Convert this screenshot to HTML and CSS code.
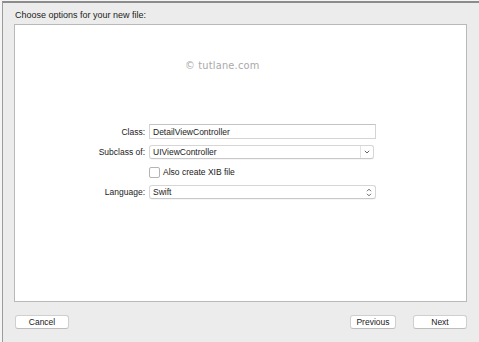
FILE: index.html
```html
<!DOCTYPE html>
<html>
<head>
<meta charset="utf-8">
<link rel="stylesheet" href="styles.css">
</head>
<body>
<div class="window">
  <div class="title">Choose options for your new file:</div>
  <div class="panel">
    <div class="watermark">© tutlane.com</div>
    <div class="form">
      <div class="row r-class">
        <div class="label">Class:</div>
        <div class="field text">DetailViewController</div>
      </div>
      <div class="row r-sub">
        <div class="label">Subclass of:</div>
        <div class="field popup">
          <span class="val">UIViewController</span>
          <span class="arrow divided">
            <svg width="6" height="4" viewBox="0 0 6 4"><path d="M0.8 0.8 L3 3 L5.2 0.8" fill="none" stroke="#555" stroke-width="0.9"/></svg>
          </span>
        </div>
      </div>
      <div class="row r-check">
        <div class="label"></div>
        <div class="check"><span class="box"></span><span>Also create XIB file</span></div>
      </div>
      <div class="row r-lang">
        <div class="label">Language:</div>
        <div class="field popup lang">
          <span class="val">Swift</span>
          <span class="arrow">
            <svg width="6" height="9" viewBox="0 0 6 9"><path d="M1 3.2 L3 1.2 L5 3.2 M1 5.8 L3 7.8 L5 5.8" fill="none" stroke="#555" stroke-width="0.9"/></svg>
          </span>
        </div>
      </div>
    </div>
  </div>
  <div class="footer">
    <button class="btn cancel">Cancel</button>
    <div class="spacer"></div>
    <button class="btn prev">Previous</button>
    <button class="btn next">Next</button>
  </div>
</div>
</body>
</html>
```
FILE: styles.css
```css
html, body {
  margin: 0;
  padding: 0;
  background: #f4f4f4;
}
body {
  width: 479px;
  height: 342px;
  overflow: hidden;
  font-family: "Liberation Sans", Arial, sans-serif;
  color: #1a1a1a;
}
.window {
  margin: 1px 0 0 2px;
  height: 341px;
  box-sizing: border-box;
  background: #ececec;
  border-top: 2px solid #8c8c8c;
  border-left: 1px solid #9c9c9c;
  display: flex;
  flex-direction: column;
}
.title {
  font-size: 9px;
  line-height: 11px;
  padding: 7px 0 0 12px;
  height: 21px;
  box-sizing: border-box;
  color: #222;
}
.panel {
  margin-left: 11px;
  width: 453px;
  height: 278px;
  box-sizing: border-box;
  background: #fff;
  border: 1px solid #b9b9b9;
  display: flex;
  flex-direction: column;
}
.watermark {
  margin-top: 35px;
  margin-left: 170px;
  font-family: "DejaVu Sans", Verdana, sans-serif;
  font-size: 9.8px;
  line-height: 12px;
  color: #a9a9a9;
  letter-spacing: 0.2px;
}
.form {
  margin-top: 52px;
  display: flex;
  flex-direction: column;
  gap: 6px;
}
.row {
  display: flex;
  align-items: center;
  gap: 4px;
  font-size: 8.5px;
}
.label {
  width: 130px;
  text-align: right;
  color: #222;
}
.field {
  width: 227px;
  box-sizing: border-box;
  display: flex;
  align-items: center;
  background: #fff;
}
.text {
  height: 15px;
  border: 1px solid #d4d4d4;
  border-top-color: #c4c4c4;
  padding-left: 3px;
}
.popup {
  width: 225px;
  height: 14px;
  border: 1px solid #d6d6d6;
  border-bottom-color: #c8c8c8;
  border-radius: 3px;
  padding-left: 3px;
  box-shadow: 0 0.5px 0.5px rgba(0,0,0,0.08);
}
.popup.lang {
  width: 227px;
  height: 14px;
}
.val {
  flex: 1;
}
.arrow {
  width: 12px;
  height: 100%;
  display: flex;
  align-items: center;
  justify-content: center;
}
.arrow.divided {
  border-left: 1px solid #e2e2e2;
}
.r-check {
  margin-top: 1px;
  height: 12px;
}
.r-lang {
  margin-top: 1px;
}
.check {
  display: flex;
  align-items: center;
  gap: 3px;
}
.box {
  width: 9px;
  height: 9px;
  border: 1px solid #b4b4b4;
  border-radius: 2px;
  background: #fff;
}
.footer {
  display: flex;
  align-items: center;
  margin-top: 13px;
  padding-left: 12px;
  width: 464px;
  box-sizing: border-box;
}
.spacer {
  flex: 1;
}
.btn {
  height: 14px;
  box-sizing: border-box;
  padding: 0;
  margin: 0;
  font-family: "Liberation Sans", Arial, sans-serif;
  font-size: 8.5px;
  line-height: 12px;
  color: #1a1a1a;
  background: #fff;
  border: 1px solid #cfcfcf;
  border-bottom-color: #bdbdbd;
  border-radius: 3px;
}
.cancel { width: 54px; }
.prev { width: 46px; }
.next { width: 54px; margin-left: 17px; }
```
